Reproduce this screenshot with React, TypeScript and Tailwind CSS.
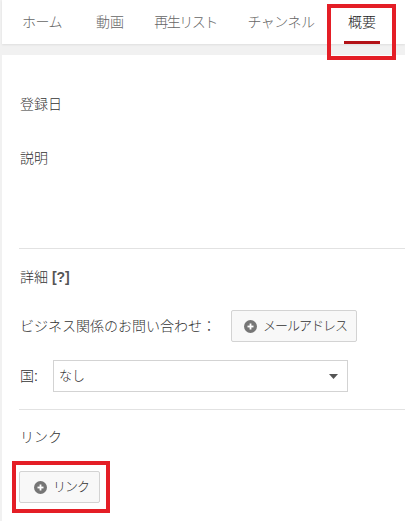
import React from "react";

const PlusCircle = () => (
  <svg width="13" height="13" viewBox="0 0 13 13" className="shrink-0">
    <circle cx="6.5" cy="6.5" r="6.5" fill="#767676" />
    <rect x="3.5" y="5.6" width="6" height="1.8" fill="#fff" />
    <rect x="5.6" y="3.5" width="1.8" height="6" fill="#fff" />
  </svg>
);

export default function App() {
  return (
    <div
      className="relative w-[405px] h-[521px] overflow-hidden bg-[#f1f1f1] text-[14px] text-[#333] font-light"
      style={{ fontFamily: '"Liberation Sans", "Noto Sans CJK JP", sans-serif' }}
    >
      {/* tab bar */}
      <div className="ml-[2px] h-[44px] bg-white shadow-[0_1px_2px_rgba(0,0,0,0.08)] flex items-stretch pl-[10px] text-[14px]">
        <div className="w-[60px] flex items-center justify-center text-[#666] tracking-[-0.5px]">ホーム</div>
        <div className="ml-[8px] w-[60px] flex items-center justify-center text-[#666]">動画</div>
        <div className="ml-[5px] w-[81px] flex items-center justify-center text-[#666] tracking-[-1.5px]">再生リスト</div>
        <div className="ml-[10px] w-[90px] flex items-center justify-center text-[#666] tracking-[-0.5px]">チャンネル</div>
        <div className="ml-[18px] w-[36px] relative flex items-center justify-center text-[#222]">
          概要
          <div className="absolute left-0 right-0 bottom-0 h-[3px] bg-[#b31217]" />
        </div>
      </div>

      {/* content */}
      <div className="mt-[11px] ml-[2px] h-[466px] bg-white pl-[17px]">
        <div className="pt-[39px] leading-[20px] pl-[1px]">登録日</div>
        <div className="mt-[34px] leading-[20px] pl-[1px]">説明</div>
        <div className="mt-[80px] border-t border-[#e2e2e2]" />
        <div className="mt-[18px] leading-[20px] pl-[1px]">
          詳細 <span className="font-bold text-[#555]">[?]</span>
        </div>
        <div className="mt-[23px] flex items-center h-[32px]">
          <div className="w-[212px] pl-[1px]">ビジネス関係のお問い合わせ：</div>
          <div className="w-[126px] h-[32px] bg-[#f8f8f8] border border-[#d3d3d3] rounded-[2px] flex items-center pl-[12px] gap-[6px] text-[#333] text-[13px] tracking-[-1px]">
            <PlusCircle />
            <span>メールアドレス</span>
          </div>
        </div>
        <div className="mt-[18px] flex items-center h-[32px]">
          <div className="w-[34px] pl-[1px]">国:</div>
          <div className="w-[295px] h-[32px] border border-[#d3d3d3] bg-white flex items-center pl-[5px] pr-[9px] justify-between text-[13px]">
            <span>なし</span>
            <svg width="9" height="5" viewBox="0 0 9 5">
              <polygon points="0,0 9,0 4.5,5" fill="#555" />
            </svg>
          </div>
        </div>
        <div className="mt-[17px] border-t border-[#e2e2e2]" />
        <div className="mt-[17px] leading-[20px] pl-[1px]">リンク</div>
        <div className="mt-[24px] w-[81px] h-[32px] bg-[#f8f8f8] border border-[#d3d3d3] rounded-[2px] flex items-center pl-[14px] gap-[6px] text-[13px] tracking-[-1px]">
          <PlusCircle />
          <span>リンク</span>
        </div>
      </div>

      {/* annotation boxes */}
      <div className="absolute left-[327px] top-[4px] w-[69px] h-[56px] border-[4px] border-[#e41e26]" />
      <div className="absolute left-[12px] top-[461px] w-[98px] h-[52px] border-[4px] border-[#e41e26]" />
    </div>
  );
}
